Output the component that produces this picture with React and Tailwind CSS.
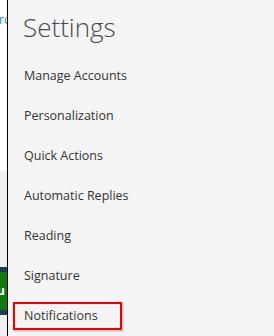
const items = [
  'Manage Accounts',
  'Personalization',
  'Quick Actions',
  'Automatic Replies',
  'Reading',
  'Signature',
]

export default function App() {
  return (
    <div className="flex w-[274px] h-[336px] overflow-hidden bg-white font-['Open_Sans',sans-serif]">
      {/* sliver of the mail page behind */}
      <div className="w-[7px] shrink-0 flex flex-col overflow-hidden">
        <div className="h-[171px] bg-white pt-[12px]">
          <span className="block text-[12px] leading-[16px] text-[#0f8fb0] -ml-[1px] whitespace-nowrap">rc</span>
        </div>
        <div className="h-[96px] bg-[#f0f0f0]" />
        <div className="h-[48px] bg-[#1f3a56] py-[5px]">
          <div className="h-full bg-[#0f7a0f] text-white text-[12px] leading-[38px] font-bold -ml-[3px]">u</div>
        </div>
        <div className="flex-1 bg-[#f0f0f0]" />
      </div>
      <div className="w-px shrink-0 bg-black" />

      {/* settings pane */}
      <div className="flex-1 bg-[#f4f4f4] flex flex-col">
        <h1 className="pl-[15px] pt-[9px] h-[56px] text-[26px] leading-[36px] font-light text-[#4a4a4a]">Settings</h1>
        {items.map((item) => (
          <div key={item} className="h-[40px] pl-[16px] flex items-center text-[12.5px] text-[#333]">
            {item}
          </div>
        ))}
        <div className="ml-[5px] w-[109px] h-[28px] mt-[6px] border-2 border-[#e00] shadow-[1px_1px_2px_rgba(0,0,0,0.3)] pl-[9px] flex items-center text-[12.5px] text-[#333]">
          Notifications
        </div>
      </div>
    </div>
  )
}
